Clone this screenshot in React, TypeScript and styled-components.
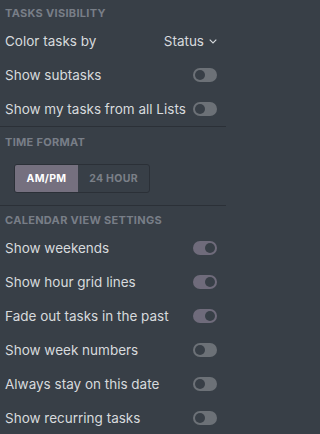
import React from 'react';
import styled, { createGlobalStyle } from 'styled-components';

const GlobalStyle = createGlobalStyle`
  html, body {
    margin: 0;
    padding: 0;
    background: #383f47;
  }
  body {
    font-family: Inter, "Noto Sans", sans-serif;
  }
`;

const Panel = styled.div`
  width: 226px;
  height: 434px;
  background: #383f47;
  color: #d7dadd;
  overflow: hidden;
`;

const Section = styled.div<{ $pad?: number }>`
  padding-bottom: ${({ $pad }) => $pad ?? 0}px;
  border-bottom: 1px solid #2b3037;
  &:last-child {
    border-bottom: none;
  }
`;

const Header = styled.div<{ $top?: number }>`
  padding: ${({ $top }) => $top ?? 8}px 5px 5px;
  line-height: 12px;
  font-size: 11px;
  font-weight: 700;
  letter-spacing: 0.3px;
  text-transform: uppercase;
  color: #787e87;
`;

const Row = styled.div`
  height: 34px;
  display: flex;
  align-items: center;
  justify-content: space-between;
  padding: 0 9px 0 5px;
  font-size: 13.5px;
`;

const Label = styled.span`
  white-space: nowrap;
`;

const Select = styled.span`
  display: flex;
  align-items: center;
  gap: 5px;
  font-size: 13.5px;
`;

const Track = styled.span<{ $on?: boolean }>`
  position: relative;
  flex: none;
  width: 24px;
  height: 14px;
  border-radius: 7px;
  background: ${({ $on }) => ($on ? '#6f6b7b' : '#6c7177')};
`;

const Knob = styled.span<{ $on?: boolean }>`
  position: absolute;
  top: 2px;
  left: ${({ $on }) => ($on ? '12px' : '2px')};
  width: 10px;
  height: 10px;
  border-radius: 50%;
  background: #383f47;
`;

const Segments = styled.div`
  display: flex;
  width: 136px;
  height: 29px;
  margin: 11px 0 0 14px;
  border: 1px solid #2b3037;
  border-radius: 3px;
  box-sizing: border-box;
  overflow: hidden;
`;

const Segment = styled.div<{ $active?: boolean }>`
  width: ${({ $active }) => ($active ? '63px' : 'auto')};
  flex: ${({ $active }) => ($active ? 'none' : '1')};
  display: flex;
  align-items: center;
  justify-content: center;
  font-size: 10.5px;
  font-weight: 700;
  letter-spacing: 0.3px;
  background: ${({ $active }) => ($active ? '#75707f' : 'transparent')};
  color: ${({ $active }) => ($active ? '#ffffff' : '#7b8088')};
`;

const Toggle: React.FC<{ on?: boolean }> = ({ on }) => (
  <Track $on={on}>
    <Knob $on={on} />
  </Track>
);

const Chevron = () => (
  <svg width="8" height="5" viewBox="0 0 8 5" fill="none">
    <path d="M0.7 0.7L4 4L7.3 0.7" stroke="#d7dadd" strokeWidth="1.1" />
  </svg>
);

const calendarRows: { label: string; on: boolean }[] = [
  { label: 'Show weekends', on: true },
  { label: 'Show hour grid lines', on: true },
  { label: 'Fade out tasks in the past', on: true },
  { label: 'Show week numbers', on: false },
  { label: 'Always stay on this date', on: false },
  { label: 'Show recurring tasks', on: false },
];

const App: React.FC = () => {
  return (
    <>
      <GlobalStyle />
      <Panel>
        <Section>
          <Header $top={7}>Tasks visibility</Header>
          <Row>
            <Label>Color tasks by</Label>
            <Select>
              Status <Chevron />
            </Select>
          </Row>
          <Row>
            <Label>Show subtasks</Label>
            <Toggle />
          </Row>
          <Row>
            <Label>Show my tasks from all Lists</Label>
            <Toggle />
          </Row>
        </Section>
        <Section $pad={12}>
          <Header $top={9}>Time format</Header>
          <Segments>
            <Segment $active>AM/PM</Segment>
            <Segment>24 HOUR</Segment>
          </Segments>
        </Section>
        <Section>
          <Header>Calendar view settings</Header>
          {calendarRows.map((r) => (
            <Row key={r.label}>
              <Label>{r.label}</Label>
              <Toggle on={r.on} />
            </Row>
          ))}
        </Section>
      </Panel>
    </>
  );
};

export default App;
